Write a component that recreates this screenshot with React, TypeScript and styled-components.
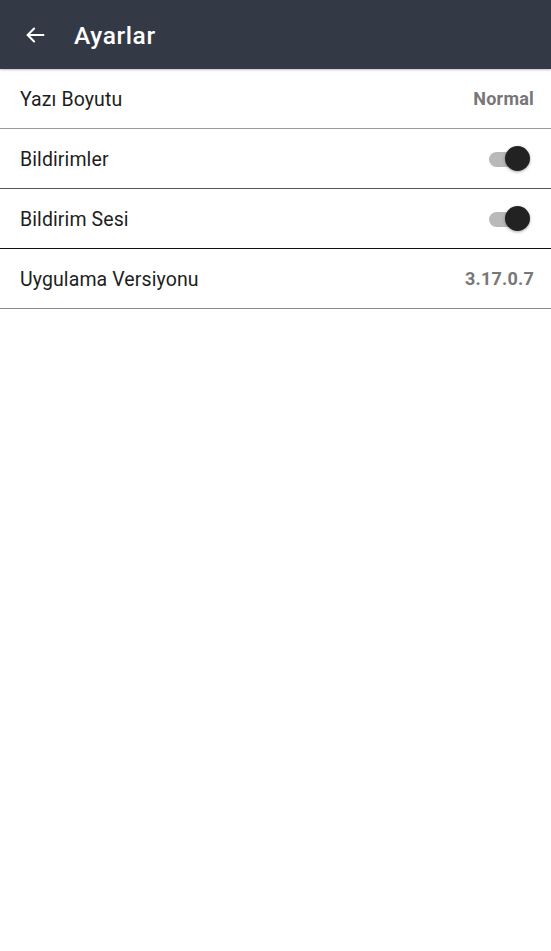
import styled, { createGlobalStyle } from 'styled-components'

const Global = createGlobalStyle`
  body{
    margin:0;
    background:#ffffff;
    font-family: Roboto, "Noto Sans", sans-serif;
  }
`

const rows = [
  { label: 'Yazı Boyutu', value: 'Normal', line: '#9a9a9a' },
  { label: 'Bildirimler', toggle: true, line: '#555555' },
  { label: 'Bildirim Sesi', toggle: true, line: '#111111' },
  { label: 'Uygulama Versiyonu', value: '3.17.0.7', line: '#8a8a8a' },
]

const App = () => {
  return (
    <Page>
      <Global />
      <Header>
        <BackButton>
          <svg width="22" height="22" viewBox="0 0 24 24" fill="none" stroke="#ffffff" strokeWidth="2.2" strokeLinecap="square">
            <path d="M21 12H4.5" />
            <path d="M11 5l-7 7 7 7" strokeLinecap="round" strokeLinejoin="miter" />
          </svg>
        </BackButton>
        <Title>Ayarlar</Title>
      </Header>
      <List>
        {rows.map((r, key) => (
          <Row key={key} $line={r.line}>
            <Label>{r.label}</Label>
            {r.toggle ? (
              <Switch>
                <Track />
                <Thumb />
              </Switch>
            ) : (
              <Value>{r.value}</Value>
            )}
          </Row>
        ))}
      </List>
    </Page>
  )
}

const Page = styled.div`
  width:100%;
  min-height:951px;
  background:#fff;
`
const Header = styled.div`
  height:69px;
  background:#333a45;
  display:flex;
  align-items:center;
  padding-left:23px;
  box-shadow: 0 1px 2px rgba(0,0,0,0.25);
`
const BackButton = styled.div`
  width:24px;
  height:24px;
  display:flex;
  align-items:center;
  justify-content:center;
  margin-right:27px;
  margin-top:1px;
`
const Title = styled.h1`
  margin:0;
  margin-top:2px;
  color:#fff;
  font-size:24.5px;
  font-weight:500;
  letter-spacing:0.6px;
`
const List = styled.div`
  display:flex;
  flex-direction:column;
`
const Row = styled.div<{ $line: string }>`
  height:59px;
  display:flex;
  align-items:center;
  justify-content:space-between;
  padding:0 17px 0 20px;
  border-bottom:1px solid ${p => p.$line};
`
const Label = styled.span`
  font-size:19.5px;
  letter-spacing:0.1px;
  color:#1e1e1e;
  margin-top:2px;
`
const Value = styled.span`
  font-size:18px;
  font-weight:700;
  letter-spacing:0.2px;
  color:#777;
`
const Switch = styled.div`
  position:relative;
  width:44px;
  height:28px;
  margin-right:2px;
`
const Track = styled.div`
  position:absolute;
  left:1px;
  top:7px;
  width:38px;
  height:15px;
  border-radius:8px;
  background:#b9b9b9;
`
const Thumb = styled.div`
  position:absolute;
  right:2px;
  top:1px;
  width:25px;
  height:25px;
  border-radius:50%;
  background:#222;
  box-shadow:0 1px 3px rgba(0,0,0,0.35);
`

export default App
